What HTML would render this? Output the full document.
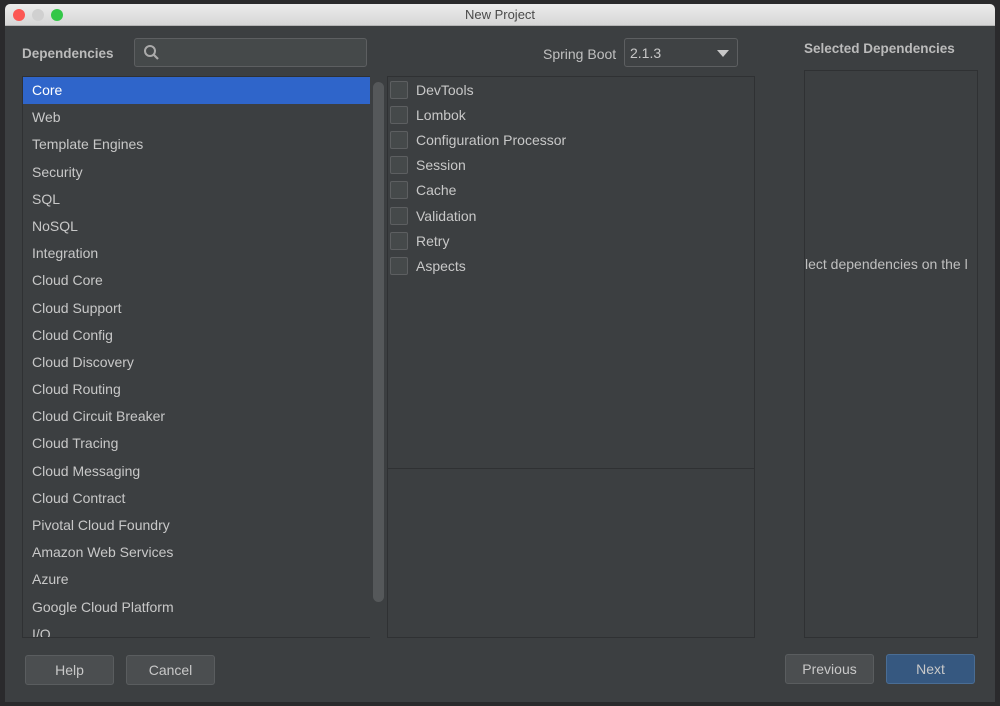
<!DOCTYPE html>
<html><head><style>
*{margin:0;padding:0;box-sizing:border-box}
body{width:1000px;height:706px;background:#2a2a2c;font-family:"Liberation Sans",sans-serif;color:#bbb;overflow:hidden;position:relative;font-size:14px}
.win{position:absolute;left:5px;top:4px;width:990px;height:698px;background:#3c3f41;border-radius:5px 5px 0 0;overflow:hidden}
.title{height:22px;background:linear-gradient(#ececec,#d6d6d6);border-bottom:1px solid #b5b5b5;text-align:center;color:#4a4a4a;font-size:13px;line-height:22px;position:relative}
.dot{position:absolute;top:5px;width:12px;height:12px;border-radius:50%}
.a{position:absolute}
.lbl{font-weight:bold;font-size:13.5px;color:#bbb}
.list{position:absolute;left:17px;top:72px;width:349px;height:562px;background:#3c3f41;border:1px solid #2f3133;overflow:hidden}
.list div{height:27.2px;line-height:27px;padding-left:9px;color:#c8c8c8}
.list .sel{background:#2f65ca;color:#fff}
.cb{position:absolute;left:385px;width:18px;height:18px;border:1px solid #5d5f61;border-radius:2px;background:#45494a}
.ct{position:absolute;left:411px;color:#c8c8c8}
.btn{position:absolute;height:30px;border:1px solid #5a5d5f;background:#4b4e50;border-radius:3px;text-align:center;line-height:28px;color:#c8c8c8}
</style></head><body>
<div class="win">
<div class="title"><span class="dot" style="left:8px;background:#fc5753;"></span><span class="dot" style="left:27px;background:#d0d0d0"></span><span class="dot" style="left:46px;background:#34c748"></span>New Project</div>
<div class="a lbl" style="left:17px;top:42px">Dependencies</div>
<div class="a" style="left:129px;top:34px;width:233px;height:29px;border:1px solid #5d5f61;border-radius:3px;background:#45494a">
<svg width="18" height="18" style="position:absolute;left:8px;top:5px"><circle cx="7" cy="7" r="5" stroke="#aaa" stroke-width="2" fill="none"/><line x1="11" y1="11" x2="15" y2="15" stroke="#aaa" stroke-width="2.2"/></svg></div>
<div class="a" style="left:538px;top:42px;color:#c0c0c0">Spring Boot</div>
<div class="a" style="left:619px;top:34px;width:114px;height:29px;border:1px solid #5d5f61;border-radius:3px;background:#3f4244;color:#c8c8c8;padding:6px 0 0 5px">2.1.3<svg width="12" height="8" style="position:absolute;right:8px;top:11px"><path d="M0 0H12L6 7Z" fill="#c8c8c8"/></svg></div>
<div class="a lbl" style="left:799px;top:37px">Selected Dependencies</div>
<div class="list">
<div class="sel">Core</div><div>Web</div><div>Template Engines</div><div>Security</div><div>SQL</div><div>NoSQL</div><div>Integration</div><div>Cloud Core</div><div>Cloud Support</div><div>Cloud Config</div><div>Cloud Discovery</div><div>Cloud Routing</div><div>Cloud Circuit Breaker</div><div>Cloud Tracing</div><div>Cloud Messaging</div><div>Cloud Contract</div><div>Pivotal Cloud Foundry</div><div>Amazon Web Services</div><div>Azure</div><div>Google Cloud Platform</div><div>I/O</div>
</div>
<div class="a" style="left:365px;top:72px;width:18px;height:562px;background:#3c3f41;border-right:1px solid #2f3133"></div>
<div class="a" style="left:368px;top:78px;width:11px;height:520px;background:#55585a;border-radius:6px"></div>
<div class="a" style="left:383px;top:72px;width:367px;height:562px;border:1px solid #2f3133;border-left:none"></div>
<div class="a" style="left:383px;top:464px;width:367px;height:1px;background:#2f3133"></div>
<div class="cb" style="top:77px"></div><div class="ct" style="top:78px">DevTools</div>
<div class="cb" style="top:102px"></div><div class="ct" style="top:103px">Lombok</div>
<div class="cb" style="top:127px"></div><div class="ct" style="top:128px">Configuration Processor</div>
<div class="cb" style="top:152px"></div><div class="ct" style="top:153px">Session</div>
<div class="cb" style="top:177px"></div><div class="ct" style="top:178px">Cache</div>
<div class="cb" style="top:203px"></div><div class="ct" style="top:204px">Validation</div>
<div class="cb" style="top:228px"></div><div class="ct" style="top:229px">Retry</div>
<div class="cb" style="top:253px"></div><div class="ct" style="top:254px">Aspects</div>
<div class="a" style="left:799px;top:66px;width:174px;height:568px;border:1px solid #2f3133;overflow:hidden;white-space:nowrap">
<div style="position:absolute;left:0;top:185px;color:#c0c0c0">lect dependencies on the l</div></div>
<div class="btn" style="left:20px;top:651px;width:89px">Help</div>
<div class="btn" style="left:121px;top:651px;width:89px">Cancel</div>
<div class="btn" style="left:780px;top:650px;width:89px">Previous</div>
<div class="btn" style="left:881px;top:650px;width:89px;background:#365880;border-color:#4a6d94">Next</div>
</div>
</body></html>
